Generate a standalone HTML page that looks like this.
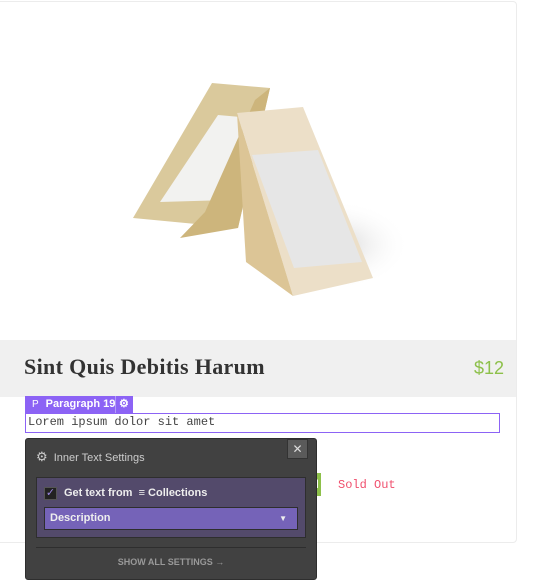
<!DOCTYPE html>
<html><head><meta charset="utf-8"><style>
*{box-sizing:border-box;margin:0;padding:0}
body{width:534px;height:583px;background:#fff;position:relative;overflow:hidden;font-family:"Liberation Sans",sans-serif}
.card{position:absolute;left:-4px;top:1px;width:521px;height:542px;border:1px solid #ececec;border-radius:4px;background:#fff}
.band{position:absolute;left:0;top:340px;width:516px;height:57px;background:#f0f0f0}
.title{position:absolute;left:24px;top:354px;font-family:"Liberation Serif",serif;font-size:22px;font-weight:bold;color:#333;letter-spacing:0.35px}
.price{position:absolute;left:474px;top:358px;font-size:18px;color:#8dc04a}
.tag{position:absolute;left:25px;top:396px;height:17px;width:108px;background:#8c63f5;color:#fff;font-size:11px;font-weight:bold;line-height:17px;white-space:nowrap}
.txt{position:absolute;left:25px;top:413px;width:475px;height:20px;border:1px solid #8c63f5;font-family:"Liberation Mono",monospace;font-size:12px;color:#444;line-height:17px;padding-left:2px}
.pop{position:absolute;left:25px;top:438px;width:292px;height:142px;background:#414141;border:1px solid #2e2e2e;border-radius:3px}
.close{position:absolute;left:261px;top:0;width:21px;height:20px;background:#5a5a5a;color:#ddd;text-align:center;font-size:12px;line-height:19px;border:1px solid #333}
.sec{position:absolute;left:10px;top:38px;width:270px;height:61px;background:#534a6b;border:1px solid #2e2e2e}
.dd{position:absolute;left:7px;top:29px;width:254px;height:23px;background:#7563b8;border:1px solid #2e2e2e;color:#eee;font-size:11px;font-weight:bold;line-height:21px;padding-left:5px}
</style></head><body>
<div class="card"></div>
<svg style="position:absolute;left:0;top:0" width="534" height="340">
<defs><radialGradient id="sh" cx="0.5" cy="0.5" r="0.5"><stop offset="0" stop-color="#d4d4d4"/><stop offset="1" stop-color="#fff" stop-opacity="0"/></radialGradient></defs>
<ellipse cx="335" cy="245" rx="75" ry="45" fill="url(#sh)"/>
<polygon points="212,83 270,88 238,228 133,218" fill="#dac99c"/>
<polygon points="218,115 252,118 228,200 160,202" fill="#f2f2f0"/>
<polygon points="255,100 270,88 238,228 180,238 205,212" fill="#cdb57c"/>
<polygon points="237,113 303,107 373,278 293,296" fill="#ecdfc8"/>
<polygon points="252,155 318,150 362,262 294,268" fill="#e6e6e6"/>
<polygon points="237,113 293,296 246,262" fill="#dcc596"/>
</svg>
<div class="band"></div>
<div class="title">Sint Quis Debitis Harum</div>
<div class="price">$12</div>
<div class="tag"><span style="margin-left:7px;font-weight:normal;font-size:10px">P</span><span style="margin-left:7px">Paragraph 19</span><span style="position:absolute;left:90px;top:0;width:1px;height:17px;background:#b49cf8"></span><span style="position:absolute;left:94px;top:0">⚙</span></div>
<div class="txt">Lorem ipsum dolor sit amet</div>
<div style="position:absolute;left:308px;top:473px;width:13px;height:23px;background:#8dc04a;color:#fff;font-size:12px;font-weight:bold;line-height:23px;text-align:center">N</div>
<div style="position:absolute;left:338px;top:478px;font-family:'Liberation Mono',monospace;font-size:12px;color:#f0506e">Sold Out</div>
<div class="pop">
<div class="close">✕</div>
<div style="position:absolute;left:10px;top:10px;color:#ccc;font-size:11px"><span style="font-size:13px">⚙</span> <span style="margin-left:3px">Inner Text Settings</span></div>
<div class="sec">
<div style="position:absolute;left:7px;top:9px;width:13px;height:13px;background:#222;border:1px solid #555;color:#9a86e0;font-size:11px;line-height:11px;text-align:center">✓</div>
<div style="position:absolute;left:27px;top:9px;color:#eee;font-size:11px;font-weight:bold">Get text from &nbsp;≡ Collections</div>
<div class="dd">Description<span style="position:absolute;right:10px;font-size:8px">▼</span></div>
</div>
<div style="position:absolute;left:10px;top:108px;width:270px;height:1px;background:#2e2e2e"></div>
<div style="position:absolute;left:0;width:290px;top:118px;text-align:center;color:#999;font-size:9px;font-weight:bold">SHOW ALL SETTINGS →</div>
</div>
</body></html>
